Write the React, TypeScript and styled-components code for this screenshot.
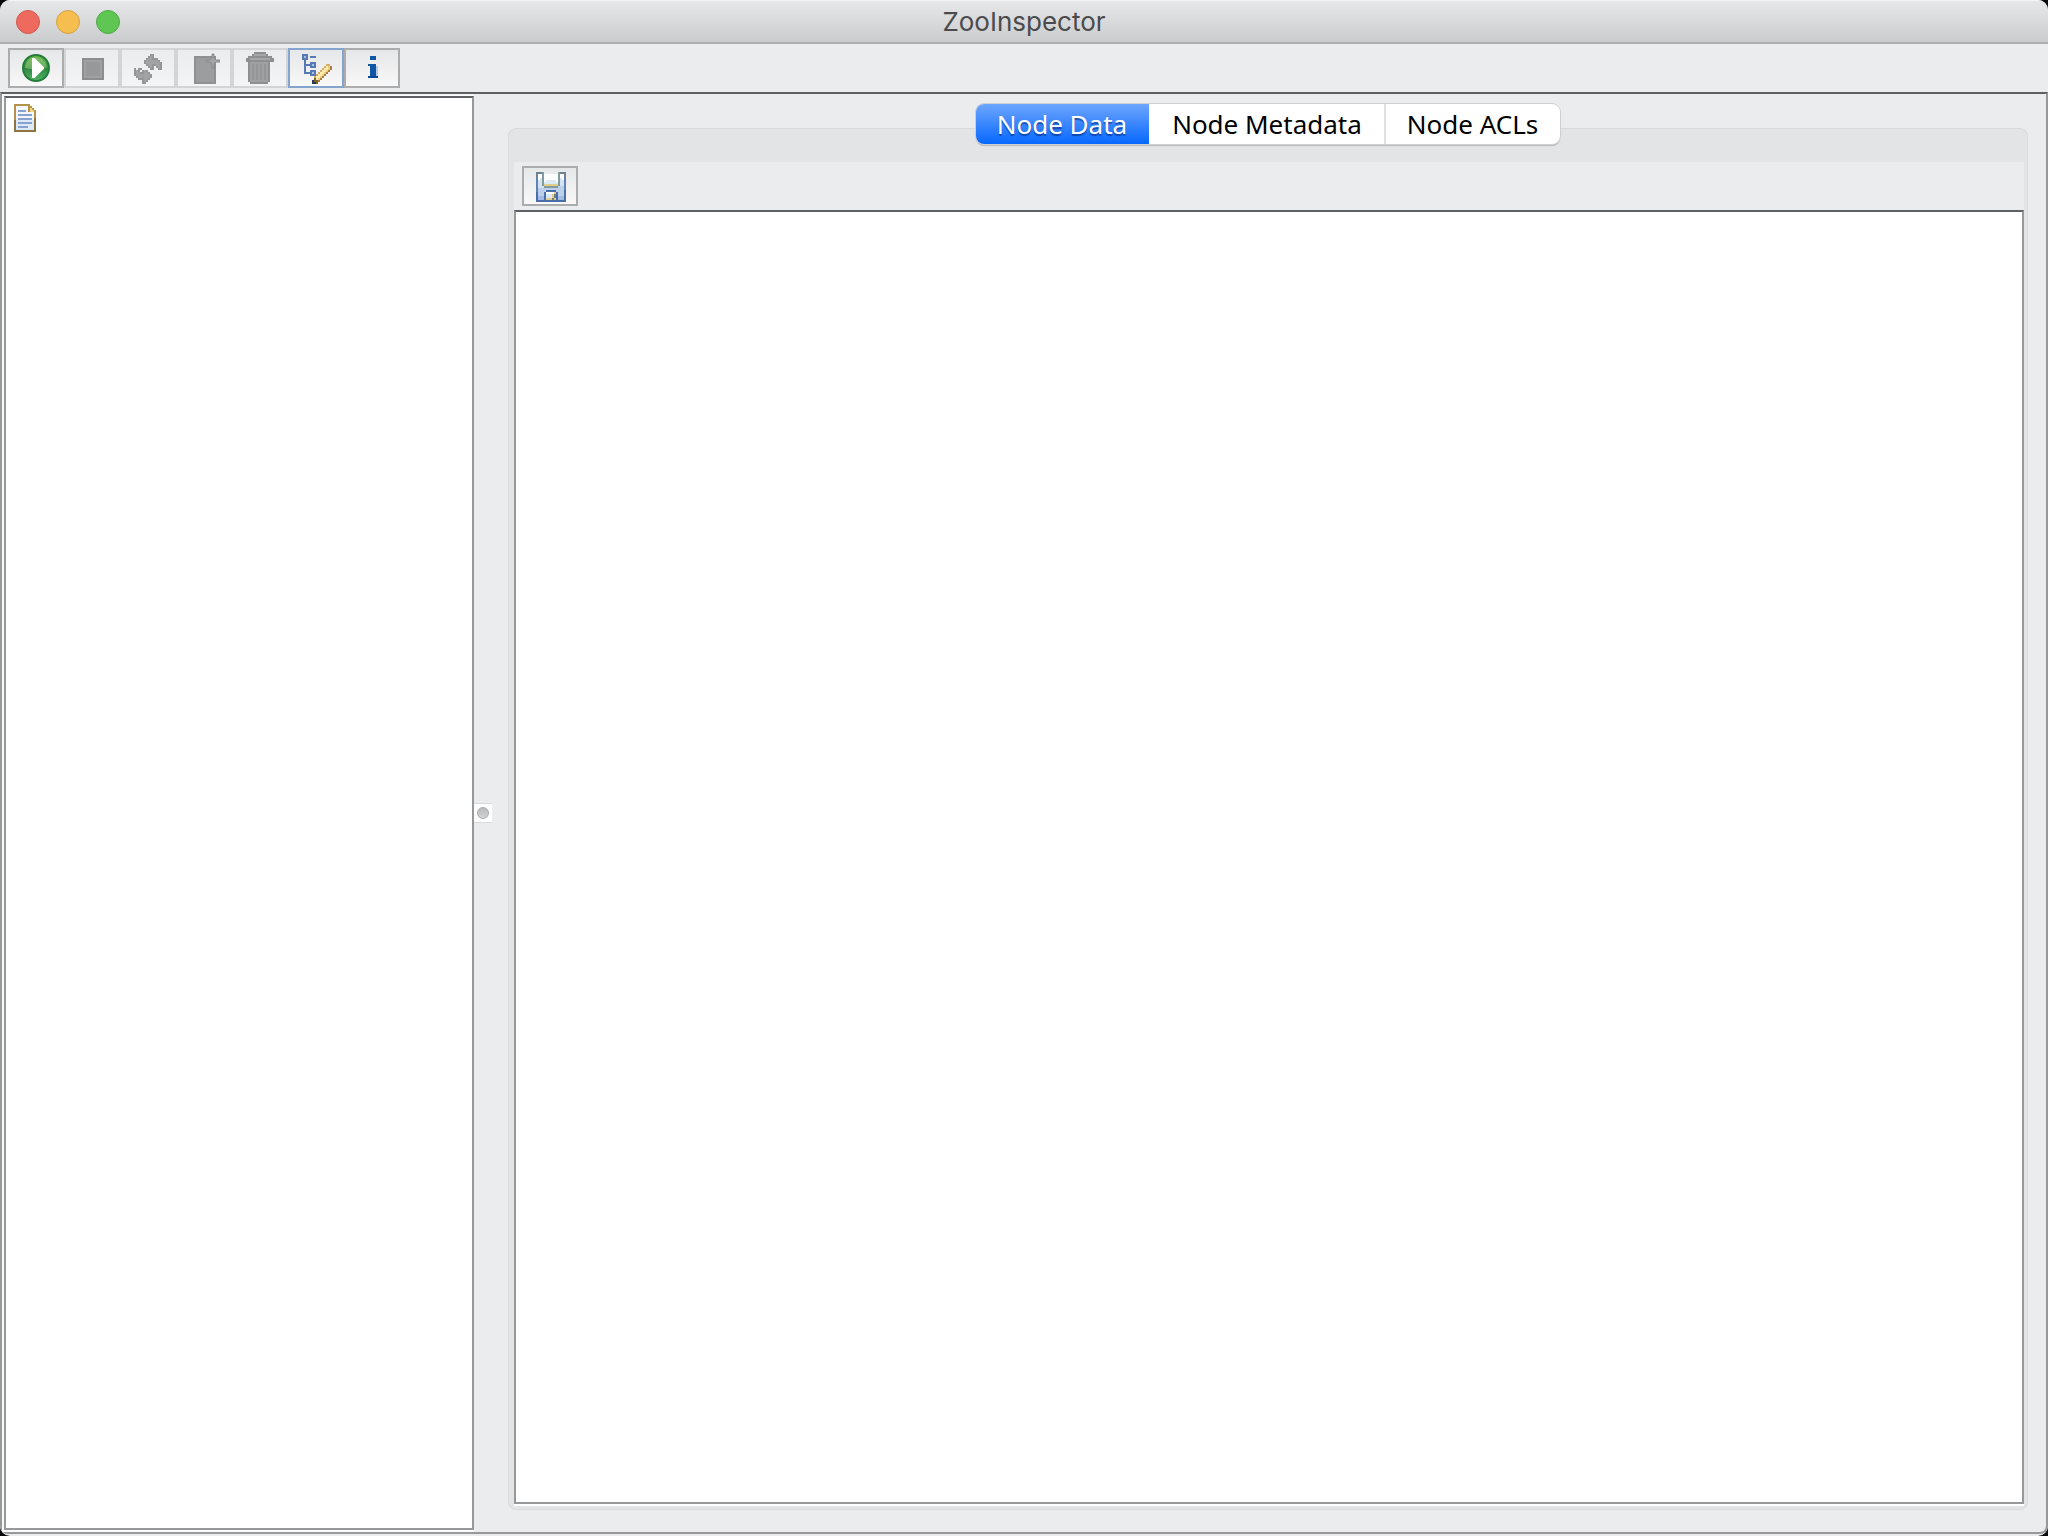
import React, { useState } from 'react';
import styled, { createGlobalStyle } from 'styled-components';

const GlobalStyle = createGlobalStyle`
  *, *::before, *::after { box-sizing: border-box; }
  body { margin: 0; background: #0b0b0d; }
  button, textarea { font: inherit; }
`;

const face = '#ebecee';
const darkLine = '#5f6063';
const midLine = '#97989a';

const Window = styled.div`
  display: flex;
  flex-direction: column;
  height: 100vh;
  padding-bottom: 2px;
  background: ${face};
  border-radius: 10px;
  overflow: hidden;
  font-family: 'Noto Sans', 'Open Sans', sans-serif;
  color: #000;
`;

const TitleBar = styled.header`
  display: grid;
  grid-template-columns: 1fr auto 1fr;
  align-items: center;
  height: 44px;
  padding: 1px 16px 0;
  background: linear-gradient(#e6e7e8, #cbccce);
  border-top: 1px solid #f4f4f5;
  border-bottom: 2px solid #adaeb0;
`;

const Lights = styled.div`
  display: flex;
  gap: 16px;
`;

const Light = styled.button<{ $fill: string; $edge: string }>`
  width: 24px;
  height: 24px;
  padding: 0;
  border: 1px solid ${(p) => p.$edge};
  border-radius: 50%;
  background: ${(p) => p.$fill};
`;

const Title = styled.h1`
  margin: 0;
  font: 400 26px/32px Inter, Roboto, sans-serif;
  color: #4a4b4d;
`;

const ToolBar = styled.div`
  display: flex;
  padding: 4px 8px;
`;

const ToolButton = styled.button<{ $tone?: 'focus' | 'plain' }>`
  display: flex;
  align-items: center;
  justify-content: center;
  width: 56px;
  height: 40px;
  padding: 0;
  border: 2px solid ${(p) => (p.$tone === 'focus' ? '#83a5cd' : '#abacae')};
  background: linear-gradient(#e6e7e8, #f8f8f9);

  &:disabled {
    border-color: #d3d4d6;
    background: linear-gradient(#ebecee, #f3f4f5);
  }
`;

const Icon = styled.svg`
  display: block;
  width: 32px;
  height: 32px;
`;

const Main = styled.main`
  display: flex;
  flex: 1;
  min-height: 0;
  border: 2px solid ${midLine};
  border-top-color: ${darkLine};
  border-radius: 0 0 8px 8px;
`;

const TreePane = styled.nav`
  flex: 0 0 472px;
  padding: 2px 0 2px 2px;
  background: #f8f9f9;
`;

const Tree = styled.ul`
  height: 100%;
  margin: 0;
  padding: 4px 6px;
  list-style: none;
  background: #fff;
  border: 2px solid ${midLine};
  border-top-color: ${darkLine};
`;

const Splitter = styled.div`
  display: flex;
  align-items: center;
  flex: 0 0 20px;
`;

const Knob = styled.span`
  display: flex;
  align-items: center;
  justify-content: center;
  width: 18px;
  height: 20px;
  background: #fff;
  border: solid #d9dadb;
  border-width: 1px 0;

  &::before {
    content: '';
    width: 12px;
    height: 12px;
    border: 1px solid #a9aaab;
    border-radius: 50%;
    background: linear-gradient(#b9babb, #d4d4d5);
  }
`;

const DataPane = styled.section`
  display: flex;
  flex-direction: column;
  flex: 1;
  min-width: 0;
  padding: 10px 18px 22px 14px;
`;

const Tabs = styled.div`
  position: relative;
  z-index: 1;
  display: flex;
  align-self: center;
  height: 40px;
  margin-bottom: -16px;
  border-radius: 8px;
  background: #fff;
  box-shadow: 0 0 0 1px #cfd0d2, 0 2px 1px #b5b6b8;
`;

const Tab = styled.button`
  padding: 0 22px 0 21px;
  border: 0;
  background: none;
  font-size: 26px;
  line-height: 40px;

  & + & { border-left: 2px solid #dfe0e2; }
  &:first-child { border-radius: 8px 0 0 8px; }
  &:last-child { border-radius: 0 8px 8px 0; }

  &[aria-selected='true'] {
    color: #fff;
    background: linear-gradient(#6da5fd, #0768ff);
    text-shadow: 0 2px 1px rgba(0, 40, 120, 0.6);
  }
  &[aria-selected='true'] + & { border-left-color: transparent; }
`;

const Group = styled.div`
  display: flex;
  flex: 1;
  min-height: 0;
  padding: 33px 3px 3px 5px;
  background: #e3e4e6;
  border: 1px solid #d9dadc;
  border-radius: 8px;
`;

const TabPanel = styled.div`
  display: flex;
  flex-direction: column;
  flex: 1;
  padding-bottom: 2px;
  background: linear-gradient(${face} 50%, #fff 50%);
`;

const Editor = styled.textarea`
  display: block;
  flex: 1;
  width: 100%;
  min-height: 0;
  margin: 0;
  padding: 4px;
  resize: none;
  outline: none;
  border: 2px solid ${midLine};
  border-top-color: ${darkLine};
  border-radius: 0;
  background: #fff;
  font-size: 26px;
`;

type Art = { rows: string[]; palette: Record<string, string>; x: number; y: number };

/* Draws a bitmap icon on a 16 by 16 grid, one character for each cell. */
function PixelIcon({ rows, palette, x, y }: Art) {
  return (
    <Icon viewBox="0 0 16 16" shapeRendering="crispEdges" aria-hidden="true">
      {rows.flatMap((row, r) =>
        [...row].map((cell, c) =>
          palette[cell] ? (
            <rect key={`${r}-${c}`} x={x + c} y={y + r} width="1" height="1" fill={palette[cell]} />
          ) : null,
        ),
      )}
    </Icon>
  );
}

const refreshArt: Art = {
  x: 1,
  y: 1,
  palette: { s: '#949596', m: '#a1a2a3' },
  rows: [
    '........ss....',
    '.......sms....',
    '......smmsss..',
    '.....smmmmmms.',
    '.....smmmmmmms',
    '......smmssmms',
    '.......sms.sms',
    's.ss....ss..ss',
    'sms.sms.......',
    'smmssmms......',
    'smmmmmmms.....',
    '.smmmmmms.....',
    '..sssmms......',
    '....sms.......',
    '....ss........',
  ],
};

const treeArt: Art = {
  x: 1,
  y: 1,
  palette: {
    B: '#5779b4', l: '#a9c0e4', g: '#d3ae68', y: '#fbe9ae', t: '#eccb85', o: '#a97f3c',
    k: '#80602f', N: '#26395f',
  },
  rows: [
    'BBB............',
    'BlB.BBB........',
    'BBB............',
    '.B.............',
    '.B..BBB........',
    '.BBBBlB.....gg.',
    '.B..BBB....gyto',
    '.B........gyyto',
    '.B..BBB..gyyto.',
    '.BBBBlB.gyyto..',
    '....BBBgyyto...',
    '......gyyto....',
    '......kyto.....',
    '.....Nkko......',
    '.....NNk.......',
  ],
};

const infoArt: Art = {
  x: 6,
  y: 2,
  palette: { b: '#0f56a4', d: '#0a4a94', l: '#b4cbe4' },
  rows: [
    '.bbb',
    '.bbb',
    '....',
    '....',
    'bbbb',
    '.bbbl',
    '.bbbl',
    '.bbbl',
    '.bbbl',
    '.bbbl',
    'ddddd',
  ],
};

const documentArt: Art = {
  x: 1,
  y: 1,
  palette: { G: '#b5924a', K: '#8f7440', w: '#f3f7fd', v: '#dde8f8', b: '#87a2cc', y: '#f4d584' },
  rows: [
    'GGGGGGGG...',
    'GwwwwwwGG..',
    'GwwwwwwGyG.',
    'GwbbbbwGyyG',
    'GwwwwwwwwwG',
    'GwbbbbbbbwG',
    'GwwwwwwwwwG',
    'GwbbbbbbbwK',
    'KvvvvvvvvvK',
    'KvbbbbbbbvK',
    'KvvvvvvvvvK',
    'KvbbbbbvvvK',
    'KvvvvvvvvvK',
    'KKKKKKKKKKK',
  ],
};

const floppyArt: Art = {
  x: 1,
  y: 1,
  palette: {
    D: '#6f8291', C: '#5e82b4', A: '#4a6ea9', w: '#fbfdfe', e: '#d9ebf5',
    p: '#d6e3f4', q: '#bccfeb', r: '#a3bbe2', y: '#e3cd8e', s: '#839a9c', n: '#6f7f80',
  },
  rows: [
    'DDDs.......sDDD',
    'DwwswwwwwwwswwD',
    'DwwswwwwwwwswwD',
    'CwpswwwwwwwspwC',
    'CppsweeeeewsppC',
    'CppseeeeeeesppC',
    'CppsyyyyyyysppC',
    'CpppsssssssqqqC',
    'CqqqqqqqqqqqqqC',
    'CqqqqAAAAAqqqqA',
    'AqqqAwwwwyAqqqA',
    'AqqqAeeeynAqqqA',
    'ArrrAppeynArrrA',
    'ArrrAyyynyArrrA',
    'AAAAAAAAAAAAAAA',
  ],
};

const ConnectIcon = () => (
  <Icon viewBox="0 0 16 16" aria-hidden="true">
    <defs>
      <linearGradient id="orb" x1="0" y1="0" x2="0" y2="1">
        <stop offset="0" stopColor="#6fbc45" />
        <stop offset="0.5" stopColor="#2f8540" />
        <stop offset="1" stopColor="#4fb765" />
      </linearGradient>
    </defs>
    <circle cx="8" cy="8" r="6.5" fill="url(#orb)" stroke="#237d3c" />
    <path d="M2.6 8C2.6 5 5 2.600 8 2.600S13.400 5 13.400 8C11 7 9 9.500 2.600 8Z" fill="#8fca7c" opacity="0.6" />
    <path d="M6.500 3.500V12.500L12 8Z" fill="#fff" stroke="#6cc522" strokeWidth="0.600" />
    <path d="M6 3V13H7.300L12 8.400V7.600L7.300 3Z" fill="#fff" />
  </Icon>
);

const StopIcon = () => (
  <Icon viewBox="0 0 16 16" aria-hidden="true">
    <rect x="3.5" y="3.5" width="10" height="10" fill="#979899" stroke="#8c8d8e" />
    <rect x="4.500" y="4.500" width="8" height="8" fill="none" stroke="#a3a4a5" strokeWidth="0.800" />
  </Icon>
);

const NewNodeIcon = () => (
  <Icon viewBox="0 0 16 16" aria-hidden="true">
    <rect x="3.500" y="2.500" width="10" height="13" fill="#9c9d9e" stroke="#8f9091" />
    <path
      d="M12 1H13V3L14 4H16V5H14L13 6V8H12V6L11 5H9V4H11L12 3Z"
      fill="#a3a4a5"
      stroke="#8a8b8c"
      strokeWidth="0.500"
    />
  </Icon>
);

const TrashIcon = () => (
  <Icon viewBox="0 0 16 16" aria-hidden="true">
    <path d="M5 0H11V1H12V2H14V3H15V5H13V15H12V16H3V15H2V5H1V3H2V2H4V1H5Z" fill="#8e8f90" />
    <path d="M5 1H11V2H5ZM3 3H13V4H3Z" fill="#a6a7a8" />
    <path d="M3 5H12V15H3Z" fill="#9fa0a1" />
    <path d="M4.500 6V14M6.500 6V14M8.500 6V14M10.500 6V14" stroke="#909192" strokeWidth="0.700" />
  </Icon>
);

const tabNames = ['Node Data', 'Node Metadata', 'Node ACLs'];

export default function App() {
  const [selected, setSelected] = useState(0);
  return (
    <>
      <GlobalStyle />
      <Window>
        <TitleBar>
          <Lights>
            <Light aria-label="Close" $fill="#ee6a5f" $edge="#d3594f" />
            <Light aria-label="Minimize" $fill="#f5be4f" $edge="#d6a243" />
            <Light aria-label="Zoom" $fill="#5fc653" $edge="#50a946" />
          </Lights>
          <Title>ZooInspector</Title>
        </TitleBar>
        <ToolBar role="toolbar" aria-label="Main">
          <ToolButton aria-label="Connect"><ConnectIcon /></ToolButton>
          <ToolButton aria-label="Disconnect" disabled><StopIcon /></ToolButton>
          <ToolButton aria-label="Refresh" disabled><PixelIcon {...refreshArt} /></ToolButton>
          <ToolButton aria-label="Add node" disabled><NewNodeIcon /></ToolButton>
          <ToolButton aria-label="Delete node" disabled><TrashIcon /></ToolButton>
          <ToolButton aria-label="Node viewers" $tone="focus"><PixelIcon {...treeArt} /></ToolButton>
          <ToolButton aria-label="About"><PixelIcon {...infoArt} /></ToolButton>
        </ToolBar>
        <Main>
          <TreePane aria-label="Nodes">
            <Tree>
              <li><PixelIcon {...documentArt} /></li>
            </Tree>
          </TreePane>
          <Splitter role="separator" aria-orientation="vertical"><Knob /></Splitter>
          <DataPane>
            <Tabs role="tablist">
              {tabNames.map((name, i) => (
                <Tab key={name} role="tab" aria-selected={i === selected} onClick={() => setSelected(i)}>
                  {name}
                </Tab>
              ))}
            </Tabs>
            <Group>
              <TabPanel role="tabpanel" aria-label={tabNames[selected]}>
                <ToolBar>
                  <ToolButton aria-label="Save"><PixelIcon {...floppyArt} /></ToolButton>
                </ToolBar>
                <Editor aria-label="Node data" />
              </TabPanel>
            </Group>
          </DataPane>
        </Main>
      </Window>
    </>
  );
}
